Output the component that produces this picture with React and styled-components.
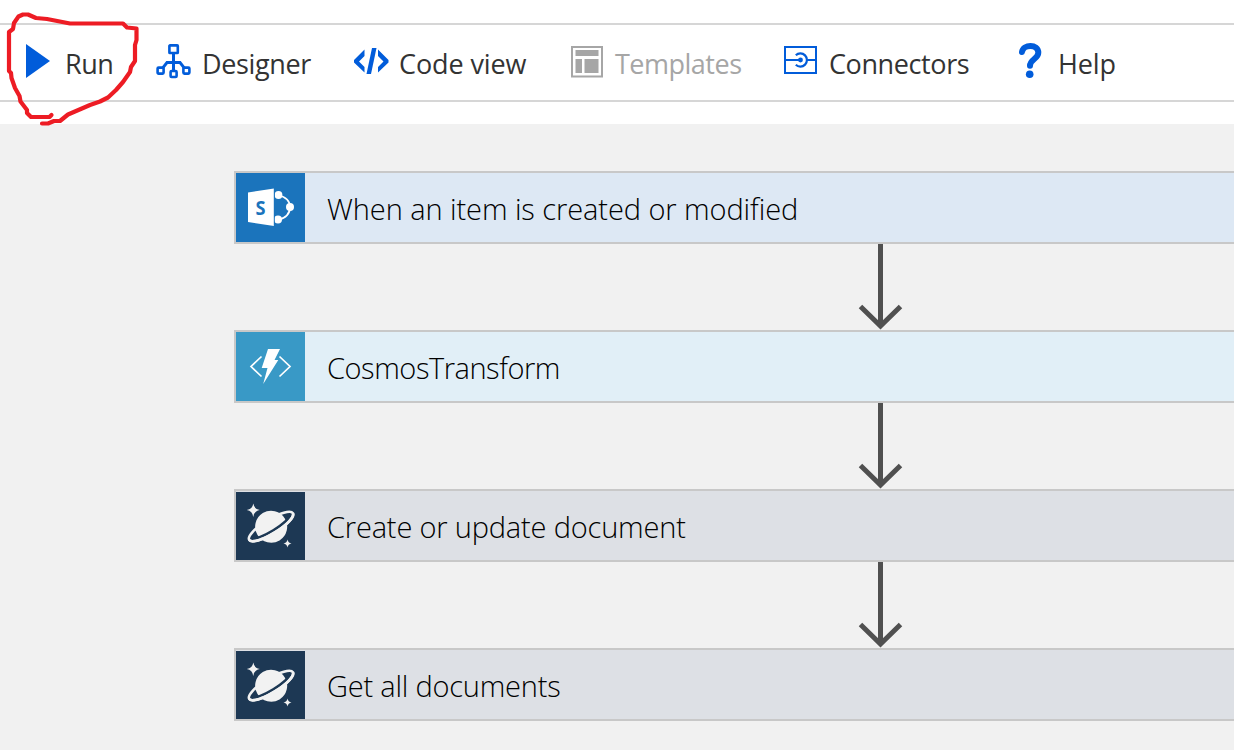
import React from 'react';
import styled, { createGlobalStyle } from 'styled-components';

const GlobalStyle = createGlobalStyle`
  html, body { margin: 0; padding: 0; overflow: hidden; background: #fff; }
  *, *::before, *::after { box-sizing: border-box; }
`;

const Page = styled.div`
  position: relative;
  display: flex;
  flex-direction: column;
  width: 1234px;
  height: 750px;
  padding-top: 23px;
  overflow: hidden;
  font-family: 'Open Sans', 'Noto Sans', sans-serif;
`;

const Toolbar = styled.nav`
  flex: none;
  display: grid;
  grid-template-columns: 131px 198px 217px 213px 233px 1fr;
  height: 79px;
  margin-bottom: 22px;
  padding-left: 25px;
  border-top: 2px solid #d6d6d6;
  border-bottom: 2px solid #d6d6d6;
`;

const Command = styled.button`
  display: grid;
  grid-template-columns: ${(p) => p.$slot}px auto;
  justify-content: start;
  height: 75px;
  padding: 0;
  border: 0;
  background: none;
  color: ${(p) => (p.disabled ? '#a6a6a6' : '#333')};
  font: 400 27px/75px 'Open Sans', 'Noto Sans', sans-serif;
  text-align: left;
  white-space: nowrap;
`;

const CommandIcon = styled.svg`
  display: block;
  width: 36px;
  height: 40px;
  margin-top: 17px;
  overflow: visible;
`;

const CommandLabel = styled.span`
  padding-top: 1px;
  letter-spacing: ${(p) => p.$tracking}px;
`;

const Canvas = styled.main`
  flex: 1;
  padding: 47px 0 0 234px;
  background: #f1f1f1;
`;

const Step = styled.section`
  display: flex;
  width: 1292px;
  height: 73px;
  border: 2px solid #c8c8c8;
  background: ${(p) => p.$tint};
`;

const StepIcon = styled.div`
  flex: none;
  width: 69px;
  height: ${(p) => (p.$inset ? 68 : 69)}px;
  margin-top: ${(p) => (p.$inset ? 1 : 0)}px;
  background: ${(p) => p.$color};

  svg { display: block; width: 69px; height: 69px; }
`;

const StepTitle = styled.h2`
  margin: 0 0 0 22px;
  padding-top: 1px;
  color: #000;
  font-size: 29px;
  font-weight: 300;
  line-height: 69px;
  letter-spacing: ${(p) => p.$tracking}px;
  white-space: nowrap;
`;

const Connector = styled.svg`
  display: block;
  width: 1292px;
  height: 86px;
  fill: none;
  stroke: #505050;
  stroke-width: 5;
`;

const Ink = styled.svg`
  position: absolute;
  left: 0;
  top: 0;
  width: 145px;
  height: 130px;
  fill: none;
  stroke: #ed1c24;
  stroke-width: 4.2;
  stroke-linejoin: round;
  stroke-linecap: round;
  pointer-events: none;
`;

const BLUE = '#015cda';

/* Every command icon is drawn in a 36 x 40 box. */
const RunIcon = () => (
  <CommandIcon viewBox="0 0 36 40"><path d="M1 2l24 17L1 36z" fill={BLUE} /></CommandIcon>
);

const DesignerIcon = () => (
  <CommandIcon viewBox="0 0 36 40" fill="none" stroke={BLUE} strokeWidth="2.6">
    <rect x="13.4" y="3.4" width="8.4" height="7.6" rx="0.6" />
    <rect x="1.6" y="25.6" width="6" height="6" rx="1" />
    <rect x="14.6" y="29" width="6" height="6" rx="1" />
    <rect x="27.4" y="25.6" width="6" height="6" rx="1" />
    <path d="M17.5 11v18M7 25.6l4-5h13l4 5" strokeWidth="3" />
  </CommandIcon>
);

const CodeIcon = () => (
  <CommandIcon viewBox="0 0 36 40" fill={BLUE}>
    <path d="M10.500 7.500v6.500L5 19.500l5.500 5.500v5.500L0 20.500v-2.500zM24 7.500v6.500l5.500 5.500L24 25v5.500l10.500-10v-2.500z" />
    <path d="M18 6h4.500l-5.500 26h-4.500z" />
  </CommandIcon>
);

const TemplatesIcon = () => (
  <CommandIcon viewBox="0 0 36 40" fill="#a6a6a6">
    <path d="M0 4h32v31.500H0zM2 6v27.500h28V6z" fillRule="evenodd" />
    <path d="M4.500 8h23v6h-23zM4.500 17h6.500v14H4.500zM13.500 17h14v14h-14z" />
  </CommandIcon>
);

const ConnectorsIcon = () => (
  <CommandIcon viewBox="0 0 36 40" fill="none" stroke={BLUE} strokeWidth="2">
    <rect x="1" y="5" width="31" height="26" />
    <path d="M1 18h15M23.500 18H32M11.800 13.200a6.600 6.600 0 1 1 0 9.600" strokeWidth="2.200" />
    <circle cx="16.500" cy="18" r="2.400" fill={BLUE} stroke="none" />
  </CommandIcon>
);

const HelpIcon = () => (
  <CommandIcon viewBox="0 0 36 40" fill="none" stroke={BLUE}>
    <path d="M4.500 10.500C5.500 2.500 20.800 2 20.800 11.300c0 6-8.300 6.500-8.300 13" strokeWidth="6" strokeLinecap="round" transform="translate(0.500 -0.500)" />
    <circle cx="12.700" cy="32.300" r="3.800" fill={BLUE} stroke="none" />
  </CommandIcon>
);

const SharePointIcon = () => (
  <svg viewBox="0 0 69 69">
    <path d="M42 22c8 2 12 6 12 12s-4 11-12 13" fill="none" stroke="#fff" strokeWidth="1.800" />
    <circle cx="42.500" cy="22" r="3.900" fill="#fff" />
    <circle cx="54" cy="34" r="4" fill="#fff" />
    <circle cx="42" cy="46.500" r="4" fill="#fff" />
    <path d="M12 19.500l26-4v37.500l-26-4z" fill="#fff" />
    <path d="M38.300 15v38" stroke="#1b74bc" strokeWidth="1" />
    <text x="19.600" y="41.500" fill="#1b74bc" fontFamily="Open Sans, sans-serif" fontSize="20" fontWeight="700" textLength="10" lengthAdjust="spacingAndGlyphs">S</text>
  </svg>
);

const FunctionIcon = () => (
  <svg viewBox="0 0 69 69">
    <path d="M25.500 24.500L15 34.500l10.500 10M43.500 24.500L54 34.500l-10.500 10" fill="none" stroke="#fff" strokeWidth="1.700" />
    <path d="M32 17h12l-5.500 11h3.800L27.200 52l4.300-16h-5.800z" fill="#fff" />
  </svg>
);

const CosmosIcon = () => (
  <svg viewBox="0 0 69 69" fill="#f2f2f2">
    <g transform="rotate(-31.500 35 34.500)">
      <ellipse cx="35" cy="34.500" rx="25.600" ry="7.200" fill="none" stroke="#f2f2f2" strokeWidth="2.600" />
      <circle cx="35" cy="34.800" r="16" />
      <path d="M13.500 34c1 6.500 42 6.500 43 0" fill="none" stroke="#1d3854" strokeWidth="2.400" />
      <path d="M9.400 34.500a25.600 7.200 0 0 0 51.200 0" fill="none" stroke="#f2f2f2" strokeWidth="2.800" />
    </g>
    <path d="M17.300 11.500q.8 5.500 6.500 6.500-5.700 1-6.500 7-.8-6-6.500-7 5.700-1 6.500-6.500zM51.500 47.500q.6 3.400 4 4-3.400.6-4 4-.6-3.400-4-4 3.400-.6 4-4z" />
  </svg>
);

const commands = [
  { label: 'Run', Icon: RunIcon, slot: 40, tracking: -0.5 },
  { label: 'Designer', Icon: DesignerIcon, slot: 46, tracking: -0.35 },
  { label: 'Code view', Icon: CodeIcon, slot: 45, tracking: -0.1 },
  { label: 'Templates', Icon: TemplatesIcon, slot: 44, tracking: -0.5, disabled: true },
  { label: 'Connectors', Icon: ConnectorsIcon, slot: 45, tracking: -0.4 },
  { label: 'Help', Icon: HelpIcon, slot: 41, tracking: -0.1 },
];

const steps = [
  { title: 'When an item is created or modified', Icon: SharePointIcon, color: '#1b74bc', tint: '#dde8f4', tracking: -0.08 },
  { title: 'CosmosTransform', Icon: FunctionIcon, color: '#3999c6', tint: '#e1eff7', tracking: -0.45 },
  { title: 'Create or update document', Icon: CosmosIcon, color: '#1d3854', tint: '#dde0e5', tracking: -0.18, inset: true },
  { title: 'Get all documents', Icon: CosmosIcon, color: '#1d3854', tint: '#dde0e5', tracking: -0.22, inset: true },
];

export default function App() {
  return (
    <Page>
      <GlobalStyle />
      <Toolbar>
        {commands.map(({ label, Icon, slot, tracking, disabled }) => (
          <Command key={label} $slot={slot} disabled={disabled}>
            <Icon />
            <CommandLabel $tracking={tracking}>{label}</CommandLabel>
          </Command>
        ))}
      </Toolbar>
      <Canvas>
        {steps.map(({ title, Icon, color, tint, tracking, inset }, i) => (
          <React.Fragment key={title}>
            {i > 0 && (
              <Connector viewBox="0 0 1292 86">
                <path d="M646.500 0v81M626.500 62.500l20 19.500 20-19.500" />
              </Connector>
            )}
            <Step $tint={tint}>
              <StepIcon $color={color} $inset={inset}><Icon /></StepIcon>
              <StepTitle $tracking={tracking}>{title}</StepTitle>
            </Step>
          </React.Fragment>
        ))}
      </Canvas>
      <Ink viewBox="0 0 145 130">
        <path d="M51.500 115L49.500 117H31L27 113V110L20.500 101.500L19.500 96L15 88L11.500 78L11 73L9 71V32L13 29L14 23L18.500 16.500L23 14.500H28L36 18L47 19L70 23.500H123L127 27.500L136.500 28.500V40L135 45V61L131 67L130 72L123 82L116 90L108 97.500L100 101.500L90 105L68 114.500L60 121H54L48 123.500H42" />
      </Ink>
    </Page>
  );
}
